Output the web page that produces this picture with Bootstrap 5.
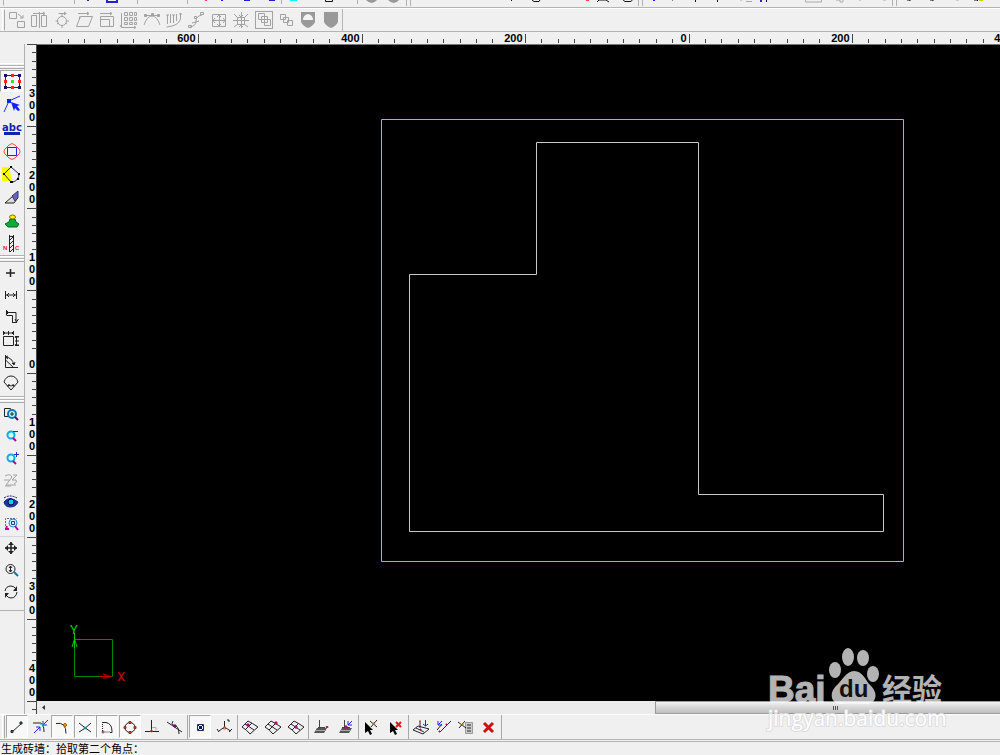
<!DOCTYPE html>
<html lang="zh-CN">
<head>
<meta charset="utf-8">
<meta name="viewport" content="width=device-width, initial-scale=1">
<title>CAD</title>
<link href="https://cdn.jsdelivr.net/npm/bootstrap@5.3.0/dist/css/bootstrap.min.css" rel="stylesheet">
<style>
body{background:#f0f0f0;font:11px "Liberation Sans","Noto Sans CJK SC",sans-serif;color:#000}
svg{display:block}
.cut-bar{height:23px;margin-top:-15px;border-bottom:1px solid #b4b4b4}
.cut-bar svg{height:22px}
.modify-bar{height:24px;border-top:1px solid #fff;border-bottom:1px solid #b4b4b4;padding-left:2px}
.grip-v{width:3px;border:1px solid #fff;border-right-color:#a8a8a8}
.grip-h{height:6px;border-top:1px solid #fff;border-bottom:1px solid #a8a8a8;background:linear-gradient(#f0f0f0 1px,#b4b4b4 1px,#b4b4b4 2px,#fff 2px,#fff 3px,#f0f0f0 3px)}
.tool{width:22px;height:22px;padding:0;border:1px solid transparent;background:none;border-radius:0;display:flex;align-items:center;justify-content:center;flex:none}
.tool svg{width:20px;height:20px;flex:none;fill:none;stroke:#222;stroke-width:1}
.tool.on{background:#f8f8f8;border-color:#a6a6a6 #fff #fff #a6a6a6}
.tool:disabled svg{stroke:#a2a2a2}
.tool.framed{border-color:#a2a2a2;width:18px;height:18px;margin:2px}
.modify-set{width:338px;border-right:1px solid #b4b4b4;padding-left:1px}
.side{width:25px;border-right:1px solid #b0b0b0}
.side .tool{width:21px}
.side .set-main .tool{width:23px}
.side-fill{height:19px}
.set-main{height:187px;padding-top:1px}
.side-set{border-bottom:1px solid #b0b0b0}
.set-dim{height:135px}
.set-view{height:208px}
.set-view hr{border-color:#888;margin:1px 0 0}
.ruler-x{height:12px;margin-left:25px}
.ruler-y{width:12px}
.ruler-x svg,.ruler-y svg,.plan svg{width:100%;height:100%}
.ruler-x text,.ruler-y text{font-weight:700;font-size:11px}
.plan{background:#000;border-top:1px solid #777}
.scroll{height:13px;background:#ebebeb}
.scroll-arrow{width:14px}
.scroll-thumb{margin-left:64.2%;border:1px solid #999;border-right:0;background:linear-gradient(#f2f2f2,#d6d6d6 50%,#bebec0)}
.snap-bar{height:26px;border-top:1px solid #fff;border-bottom:1px solid #b4b4b4;padding-left:2px}
.snap-set{padding:0 1px;border-right:1px solid #a8a8a8}
.snap-bar .tool{height:23px}
.w8{width:183px}.w4{width:93px}.w3{width:71px}.w2{width:50px}
.status{height:14px;border-top:1px solid #b4b4b4;line-height:14px;padding-left:1px;margin-top:1px}
.stamp{right:52px;bottom:15px;width:184px;height:94px;pointer-events:none}
</style>
</head>
<body class="vh-100 overflow-hidden d-flex flex-column position-relative">

<header class="flex-shrink-0">
  <div class="cut-bar overflow-hidden">
    <svg width="1000" height="22" viewBox="0 -15 1000 22" fill="none" stroke-width="1">
      <path stroke="#b0b0b0" d="M3.500 0V5.500M74.500 0V4M137.500 0V4M187.500 0V4M281.500 0V4M357.500 0V4M406.500 0V6M410.500 0V6M638.500 0V6M642.500 0V6M892.500 0V6M896.500 0V6"/>
      <path stroke="#22c" stroke-width="2" d="M87 0h2M107 -4V2H117V-4M221 0h2M244 0h6M269 0h6M653 0h2M761 -2V2"/>
      <path stroke="#e44" stroke-width="2" d="M205 0h2M586 0h3"/>
      <path stroke="#0ff" stroke-width="2" d="M290 0h7"/>
      <path stroke="#111" d="M325.500 -2v3.500h7v-3M511.500 -1v2M532 0l2 1.500h5l1-1.500M597 2l2-2h7l3 2M622 -1l3 2.500h6l2-2.500M672 0h1M695.500 -1v3M717.500 -1v3M766.500 -1v3M907 0h3v1M930 0h3v1M974 0h3l1 1"/>
      <path stroke="#aaa" d="M740 0h2M746 1.500h6M805.500 -2v4h16v-4M836 0h4v2h3v-3M859 0h2M883 0h3M956 0h3"/>
      <path stroke="#cc0" stroke-width="2" d="M979 0h4"/>
      <path fill="#999" d="M366 0q6 6 11 0zM388 0q6 6 11 0z"/>
    </svg>
  </div>

  <div class="modify-bar d-flex" role="toolbar" aria-label="Modify">
    <div class="grip-v"></div>
    <div class="modify-set d-flex justify-content-between">
      <button class="tool" disabled aria-label="Copy"><svg viewBox="0 0 20 20"><path d="M2.500 2.500h7v6h-7zM10.500 11.500h7v6h-7zM11 4l5 4m0-3v3h-3"/></svg></button>
      <button class="tool" disabled aria-label="Mirror"><svg viewBox="0 0 20 20"><path d="M2.500 5.500h5v11h-5zM12.500 5.500h5v11h-5zM10.500 2v16M4 3.500h12M14 2l2 1.500L14 5"/></svg></button>
      <button class="tool" disabled aria-label="Rotate"><svg viewBox="0 0 20 20"><circle cx="10" cy="11" r="4.500"/><path d="M6.500 3.500h8M12 2l2 1.500L12 5M10 4v2M10 15v3M3.500 11h2M15 11h2M5 14l2-1M15 14l-2-1"/></svg></button>
      <button class="tool" disabled aria-label="Skew"><svg viewBox="0 0 20 20"><path d="M6.500 6.500h12l-4 10h-12zM4 3.500h11M13 2l2 1.500L13 5M5.500 6.500v3"/></svg></button>
      <button class="tool" disabled aria-label="Scale"><svg viewBox="0 0 20 20"><path d="M3.500 6.500h13v10h-13zM3.500 9.500h9v7M3 3.500h12M13 2l2 1.500L13 5"/></svg></button>
      <button class="tool" disabled aria-label="Array"><svg viewBox="0 0 20 20"><path d="M5.500 2.500h3v3h-3zM10.500 2.500h3v3h-3zM15.500 2.500h2v3h-2zM5.500 7.500h3v3h-3zM10.500 7.500h3v3h-3zM15.500 7.500h2v3h-2zM5.500 12.500h3v2h-3zM10.500 12.500h3v2h-3zM15.500 12.500h2v2h-2zM2.500 3v14.500H17M1 15l1.500 2.500M15 16l2 1.500-2 1"/></svg></button>
      <button class="tool" disabled aria-label="Arc array"><svg viewBox="0 0 20 20"><path d="M2 15q3-9 8-9t8 9M3 5.500h14"/><path fill="#a2a2a2" d="M2.500 4.500v2h2v-2zM9.500 3.500v2h2v-2zM15.500 4.500v2h2v-2z"/></svg></button>
      <button class="tool" disabled aria-label="Stretch"><svg viewBox="0 0 20 20"><path d="M3.500 5v9M6.500 4v9M9.500 5v8M12.500 4v7M16.500 3v6q-2 7-14 8M2 5h3M8 5h3M15 4h3"/></svg></button>
      <button class="tool" disabled aria-label="Path array"><svg viewBox="0 0 20 20"><path d="M4 17q6-1 6-6t6-6M14.500 2.500h3v2h-3zM8.500 6.500h2v2h-2zM2.500 15.500h3v2h-3zM10 12l3-1M6 13l4-1"/></svg></button>
      <button class="tool" disabled aria-label="Expand"><svg viewBox="0 0 20 20"><path d="M3.500 4.500h13v12h-13zM10.500 5v11M4 10.500h12M8 7l2-2 2 2M8 14l2 2 2-2M6 8l-2 2.500L6 13M14 8l2 2.500-2 2.500"/></svg></button>
      <button class="tool" disabled aria-label="Explode"><svg viewBox="0 0 20 20"><path d="M6.500 7.500h7v7h-7zM10.500 2v16M2 10.500h16M3 4l4 4M17 4l-4 4M3 17l4-3M17 17l-4-3M8 5l2 2 2-2M8 17l2-2 2 2"/></svg></button>
      <button class="tool framed" disabled aria-label="Group"><svg viewBox="0 0 20 20"><path d="M4.500 3.500h6v6h-6zM7.500 6.500h6v6h-6zM10.500 9.500h6v6h-6z"/></svg></button>
      <button class="tool" disabled aria-label="Ungroup"><svg viewBox="0 0 20 20"><path d="M4.500 4.500h5v5h-5zM7.500 7.500h5v5h-5zM11.500 10.500h5v5h-5z"/></svg></button>
      <button class="tool" disabled aria-label="Half shield"><svg viewBox="0 0 20 20"><path fill="#999" stroke="none" d="M3 2h14v10q-2 4-7 6-5-2-7-6z"/><path fill="#f4f4f4" stroke="none" d="M5 10q0-5 5-6 5 1 5 6z"/></svg></button>
      <button class="tool" disabled aria-label="Shield"><svg viewBox="0 0 20 20"><path fill="#999" stroke="none" d="M3 2h14v10q-2 4-7 6-5-2-7-6z"/></svg></button>
    </div>
  </div>
</header>

<main class="d-flex flex-column flex-grow-1 overflow-hidden">
  <div class="ruler-x flex-shrink-0"><svg id="rx" role="img" aria-label="Horizontal ruler"></svg></div>
  <div class="d-flex flex-grow-1 overflow-hidden">
    <aside class="side flex-shrink-0" role="toolbar" aria-label="Draw and view" aria-orientation="vertical">
      <div class="side-fill"></div>
      <div class="grip-h"></div>
      <div class="side-set set-main d-flex flex-column justify-content-between">
        <button class="tool on" aria-label="Select"><svg viewBox="0 0 20 20"><path stroke="#227" d="M3.500 4.500h14v12h-14z"/><path fill="#116" stroke="none" d="M2 3h3v3H2zM16 3h3v3h-3zM2 15h3v3H2zM16 15h3v3h-3z"/><path fill="#f22" stroke="none" d="M9 3h3v3H9zM9 15h3v3H9zM2 9h3v3H2zM16 9h3v3h-3z"/><path fill="#2e2" stroke="none" d="M9 9h3v3H9z"/></svg></button>
        <button class="tool" aria-label="Node edit"><svg viewBox="0 0 20 20"><path stroke="#23d" d="M2 18L7 7l11-5"/><path fill="#12e" stroke="none" d="M5 5h4v4H5zM9 8l9 3-3 1 3 4-2 1-3-3-1 3z"/></svg></button>
        <button class="tool" aria-label="Text"><svg viewBox="0 0 20 20"><text x="0" y="13" font-family="DejaVu Sans, sans-serif" font-weight="700" font-size="10" fill="#12b" stroke="none">abc</text><path fill="#12a" stroke="none" d="M2 14h16v3H2z"/></svg></button>
        <button class="tool" aria-label="Shapes"><svg viewBox="0 0 20 20"><path stroke="#f44" d="M7 4q3-3 6 0M16 7q4 3.500 0 7M13 17q-3 3-6 0M4 14q-4-3.500 0-7M7 4L4 7M13 4l3 3M16 14l-3 3M4 14l3 3"/><path stroke="#22d" d="M5.500 6.500h9v8h-9z"/></svg></button>
        <button class="tool" aria-label="Polyline"><svg viewBox="0 0 20 20"><path fill="#ff0" stroke="none" d="M0 3h7l3 14H0z"/><path stroke="#226" d="M2 10l7-7 8 7q0 6-6 8H9z"/><path fill="#000" stroke="none" d="M1 9h2v2H1zM8 2h2v2H8zM16 9h2v2h-2zM8 17h3v2H8zM15 14h2v2h-2z"/></svg></button>
        <button class="tool" aria-label="Knife"><svg viewBox="0 0 20 20"><path fill="#ddd" d="M3 16l8-7 4 3-3 4z"/><path fill="#66b" stroke="#336" d="M10 9l6-5v7l-3 3z"/></svg></button>
        <button class="tool" aria-label="Stamp"><svg viewBox="0 0 20 20"><path fill="#1a3" stroke="#063" d="M8 8h5l1 3 3 2-2 3H6l-3-3 4-2z"/><ellipse cx="10.500" cy="6" rx="3" ry="2" fill="#fe0" stroke="#770"/></svg></button>
        <button class="tool" aria-label="NC"><svg viewBox="0 0 20 20"><path d="M7.500 1v17M11.500 1v17M7.500 2.500h4M8 6l3-3M8 10l3-3M8 14l3-3M8 18l3-3"/><text x="1" y="16" font-size="6" font-weight="700" fill="#e22" stroke="none">N</text><text x="13" y="16" font-size="6" font-weight="700" fill="#e22" stroke="none">C</text></svg></button>
      </div>
      <div class="grip-h"></div>
      <div class="side-set set-dim">
        <button class="tool" aria-label="Point"><svg viewBox="0 0 20 20"><path stroke-width="1.500" d="M5 10h9M9.500 6v8"/></svg></button>
        <button class="tool" aria-label="Distance"><svg viewBox="0 0 20 20"><path d="M4.500 6v8M15.500 6v8M5 10h10M8 8l-2 2 2 2M12 8l2 2-2 2"/></svg></button>
        <button class="tool" aria-label="Step dimension"><svg viewBox="0 0 20 20"><path d="M5.500 3v5M5 5.500h10v9M5.500 8.500h6v7M11 15.500h5M7 4L5.500 5.500 7 7M14 12l1.500 3 2-3"/></svg></button>
        <button class="tool" aria-label="Size"><svg viewBox="0 0 20 20"><path d="M2.500 7.500h10v9h-10zM2.500 2v4M12.500 2v4M7.500 2v4M2 4h10M14 7.500h4M14 16.500h4M14 12h4M15.500 7v10M4 3L3 4l1 1M11 3l1 1-1 1M14 9l1.500-2 2 2M14 15l1.500 2 2-2"/></svg></button>
        <button class="tool" aria-label="Angle"><svg viewBox="0 0 20 20"><path d="M4.500 4v12.500H17M4.500 9L12 16M4 6q7 0 9 8M7 5L4.500 6 7 8M11 12l2 2 1-3"/></svg></button>
        <button class="tool" aria-label="Radius"><svg viewBox="0 0 20 20"><path d="M3 9q2-6 7-6t7 6l-7 8zM7 12q3 2 6 0M7 14v-2h2M13 14v-2h-2"/></svg></button>
      </div>
      <div class="grip-h"></div>
      <div class="side-set set-view">
        <button class="tool" aria-label="Zoom window"><svg viewBox="0 0 20 20"><path fill="#eee" d="M3.500 4.500h6v8h-6z"/><circle cx="11" cy="10" r="4" fill="#bff" stroke="#17b" stroke-width="2"/><path stroke="#707" stroke-width="2" d="M14 13l3 3"/><path d="M9 10h4M11 8v4"/></svg></button>
        <button class="tool" aria-label="Zoom out"><svg viewBox="0 0 20 20"><circle cx="10" cy="9" r="3.500" fill="#dff" stroke="#1ad" stroke-width="2"/><path stroke="#b08" stroke-width="2" d="M12 12l3 3"/><path stroke="#23b" d="M12 5.500h5"/></svg></button>
        <button class="tool" aria-label="Zoom in"><svg viewBox="0 0 20 20"><circle cx="10" cy="10" r="3.500" fill="#dff" stroke="#1ad" stroke-width="2"/><path stroke="#b08" stroke-width="2" d="M12 13l3 3"/><path stroke="#23b" d="M13 6.500h5M15.500 4v5"/></svg></button>
        <button class="tool" disabled aria-label="Zoom back"><svg viewBox="0 0 20 20"><path d="M4 6q5-3 7 1l-6 8h10M12 5h4l-5 5h4q2 2-2 4M3 10h5M4 16h6"/></svg></button>
        <button class="tool" aria-label="View"><svg viewBox="0 0 20 20"><path fill="#23a" stroke="#11328a" d="M3 10q5-7 14 0-2 5-8 5-5 0-6-5z"/><circle cx="10" cy="10" r="3" fill="#0cf" stroke="#004"/><path stroke="#115" stroke-dasharray="2 1" d="M3 6q6-4 13 0"/></svg></button>
        <button class="tool" aria-label="Zoom extents"><svg viewBox="0 0 20 20"><path stroke="#66a" stroke-dasharray="2 1" d="M4.500 12V4.500h11"/><circle cx="12" cy="9" r="4" fill="#cff" stroke="#28b"/><path stroke="#238" d="M10.500 7.500h3v3h-3z"/><path stroke="#b0a" stroke-width="2" d="M4 15h4M6 12l-1 3M14 12l3 4"/></svg></button>
        <hr>
        <button class="tool" aria-label="Pan"><svg viewBox="0 0 20 20"><path d="M4 10h12M10 4v12" stroke-width="1.500"/><path fill="#222" stroke="none" d="M10 4l3 3H7zM10 16l3-3H7zM4 10l3-3v6zM16 10l-3-3v6z"/></svg></button>
        <button class="tool" aria-label="Dynamic zoom"><svg viewBox="0 0 20 20"><circle cx="9.500" cy="9" r="4.500"/><path d="M9.500 6v6M8 8l1.500-2L11 8M8 10l1.500 2 1.500-2"/><path stroke="#17a" stroke-width="2" d="M13 12l4 4"/></svg></button>
        <button class="tool" aria-label="Redraw"><svg viewBox="0 0 20 20"><path d="M4 9q1-5 6-5 3 0 5 3M16 10q-1 6-6 6-3 0-5-3"/><path fill="#222" stroke="none" d="M16 4v5h-4zM4 16v-5h4z"/></svg></button>
      </div>
    </aside>

    <div class="ruler-y flex-shrink-0"><svg id="ry" role="img" aria-label="Vertical ruler"></svg></div>

    <div class="d-flex flex-column flex-grow-1 overflow-hidden">
      <div class="plan flex-grow-1 overflow-hidden">
        <svg role="img" aria-label="Drawing">
          <g transform="translate(-37 -45)" fill="none">
            <path stroke="#c4c400" d="M381.500 119.500H903.500V561.500H381.500Z"/>
            <path stroke="#c8c8c8" d="M536.500 142.500H698.500V494.500H883.500V531.500H409.500V274.500H536.500Z"/>
            <path stroke="#080" d="M74.500 639.500H112.500V676.500H74.500Z"/>
            <path stroke="#0c0" d="M74.500 633V648M72 647l2.500-8 2.500 8"/>
            <path stroke="#b00" d="M103 674l8 2.500-8 2M100 676.500h12"/>
            <g font-family="Roboto, sans-serif" font-size="13">
              <text x="70" y="634" fill="#0c0">Y</text>
              <text x="117" y="681" fill="#c00">X</text>
            </g>
          </g>
        </svg>
      </div>
      <div class="scroll d-flex flex-shrink-0">
        <svg class="scroll-arrow position-absolute" viewBox="0 0 14 13"><path fill="#333" d="M8 4v5L5 6.500z"/></svg>
        <div class="scroll-thumb flex-grow-1 d-flex justify-content-center align-items-center">
          <svg class="ms-3" width="8" height="6" stroke="#555"><path d="M1.500 1v4M3.500 1v4M5.500 1v4"/></svg>
        </div>
      </div>
    </div>
  </div>
</main>

<footer class="flex-shrink-0">
  <div class="snap-bar d-flex" role="toolbar" aria-label="Object snap">
    <div class="grip-v"></div>
    <div class="snap-set w8 d-flex justify-content-between">
      <button class="tool on" aria-label="Endpoint"><svg viewBox="0 0 20 20"><path d="M5 15L15 6"/><path fill="#0aa" d="M4 13.500h2v2H4zM13 5h2v2h-2z"/></svg></button>
      <button class="tool" aria-label="Nearest"><svg viewBox="0 0 20 20"><path d="M3 6h8q3 2 3 9"/><path stroke="#22e" d="M4 16l6-6M10 14v-4H6M18 3l-5 5M13 4v4h4"/><path stroke="#0bb" d="M10 7h3v3"/></svg></button>
      <button class="tool on" aria-label="Midpoint"><svg viewBox="0 0 20 20"><path d="M4 6.500q10-2 10 10"/><circle cx="13" cy="8" r="1.500" fill="#fa0" stroke="#a50"/></svg></button>
      <button class="tool on" aria-label="Intersection"><svg viewBox="0 0 20 20"><path d="M4 6q6 5 12 9M4 15q6-3 12-9"/><circle cx="10" cy="11" r="1" fill="#0cc" stroke="#088"/></svg></button>
      <button class="tool on" aria-label="Arc centre"><svg viewBox="0 0 20 20"><path d="M5 5.500h4q6 1 6 9v1h-2"/><path stroke-dasharray="1 1" d="M5.500 7v8H13"/><circle cx="6" cy="15" r="1" fill="#0cc" stroke="#a44"/></svg></button>
      <button class="tool on" aria-label="Quadrant"><svg viewBox="0 0 20 20"><circle cx="10" cy="10.500" r="5"/><path fill="#d42" stroke="#832" d="M9 4.500h2v2H9zM9 14.500h2v2H9zM4 9.500h2v2H4zM14 9.500h2v2h-2z"/></svg></button>
      <button class="tool" aria-label="Perpendicular"><svg viewBox="0 0 20 20"><path d="M9.500 3v11M3 14.500h14"/><path stroke="#aaa" d="M10 10.500h4v3"/><circle cx="9.500" cy="14" r="1" stroke="#c44"/></svg></button>
      <button class="tool" aria-label="Tangent"><svg viewBox="0 0 20 20"><path d="M2 5l15 10M8 4q-2 3 0 4 6 0 6 9"/><path fill="#c08" stroke="#707" d="M9 8h2v2H9z"/></svg></button>
    </div>
    <div class="snap-set w2 d-flex justify-content-between">
      <button class="tool on" aria-label="Node"><svg viewBox="0 0 20 20"><path fill="#dff" stroke="#226" d="M7.500 7.500h6v6h-6z"/><path stroke="#226" d="M8 8l5 5M13 8l-5 5"/><path fill="#115" stroke="none" d="M9 9h3v3H9z"/></svg></button>
      <button class="tool" aria-label="Axis"><svg viewBox="0 0 20 20"><path d="M9.500 4v6L4 14M9.500 10l6 4M2 12l2 3M14 15l3-3M12 3h2v2"/><path stroke="#c42" d="M8.500 10h2v2h-2z"/></svg></button>
    </div>
    <div class="snap-set w3 d-flex justify-content-between">
      <button class="tool" aria-label="Grid vertex"><svg viewBox="0 0 20 20"><path d="M2 10l6-6q4 2 10 6l-8 7q-3-4-8-7M5 7l9 6M12 6l-7 7"/><path fill="#d08" stroke="#a07" d="M7 7h2v2H7z"/></svg></button>
      <button class="tool" aria-label="Grid edge"><svg viewBox="0 0 20 20"><path d="M2 10l6-6q4 2 10 6l-8 7q-3-4-8-7M5 7l9 6M13 6l-7 7"/><path fill="#d08" stroke="#a07" d="M12 5h2v2h-2z"/></svg></button>
      <button class="tool" aria-label="Grid centre"><svg viewBox="0 0 20 20"><path d="M2 10l6-6q4 2 10 6l-8 7q-3-4-8-7M5 7l9 6M13 6l-7 7"/><path fill="#d08" stroke="#a07" d="M9 9h2v2H9z"/></svg></button>
    </div>
    <div class="snap-set w2 d-flex justify-content-between">
      <button class="tool" aria-label="Plane"><svg viewBox="0 0 20 20"><path stroke="#444" d="M8.500 3v7M7 10.500h7"/><path fill="#555" stroke="none" d="M6 11h10l-3 5H3z"/><path stroke="#aaa" d="M5 13.500h9"/><path fill="#e42" stroke="#a32" d="M15 9.500h2v1h-2z"/></svg></button>
      <button class="tool" aria-label="Project to plane"><svg viewBox="0 0 20 20"><path stroke="#444" d="M8.500 3v7M6 10.500h8"/><path fill="#555" stroke="none" d="M6 11h10l-3 5H3z"/><path stroke="#aaa" d="M5 13.500h9"/><path stroke="#22e" d="M16 4l-4 4M12 4v4h4"/><path fill="#d08" stroke="#a07" d="M9 9h2v2H9z"/></svg></button>
    </div>
    <div class="snap-set w2 d-flex justify-content-between">
      <button class="tool" aria-label="Pick intersection"><svg viewBox="0 0 20 20"><path fill="#000" stroke="none" d="M4 5v11l3-2 2 4 2-1-2-4h3z"/><path d="M9 4l7 6M16 3l-6 7"/><path fill="#fb0" stroke="#b70" d="M12 6h1v1h-1z"/></svg></button>
      <button class="tool" aria-label="Cancel pick"><svg viewBox="0 0 20 20"><path fill="#000" stroke="none" d="M4 5v11l3-2 2 4 2-1-2-4h3z"/><path stroke="#e11" stroke-width="2" d="M10 5l5 5M15 5l-5 5"/></svg></button>
    </div>
    <div class="snap-set w4 d-flex justify-content-between">
      <button class="tool" aria-label="Project point"><svg viewBox="0 0 20 20"><path d="M2 13l5-4 11 3-6 5zM9 4v7M5 11l8 4"/><path stroke="#22e" d="M14.500 3v6M12 7l2.500 2L17 7"/><path fill="#d08" stroke="#a07" d="M9 12h1v1H9z"/><path stroke="#c42" d="M8 4h2"/></svg></button>
      <button class="tool" aria-label="Measure point"><svg viewBox="0 0 20 20"><path d="M3 13l5-6M6 15L17 4"/><path stroke="#22e" d="M8 4L4 8M4 4v4h4"/><path fill="#d08" stroke="#a07" d="M5 14h1v1H5zM12 7h1v1h-1z"/></svg></button>
      <button class="tool" aria-label="Snap settings"><svg viewBox="0 0 20 20"><path fill="#ccc" stroke="#999" d="M9.500 5.500h7v11h-7z"/><path d="M2 5l8 6M9 4l-6 7M11 8h4M11 11h4M11 14h4"/><path fill="#fb0" stroke="#b70" d="M6 7h1v1H6z"/></svg></button>
      <button class="tool" aria-label="Clear snaps"><svg viewBox="0 0 20 20"><path stroke="#c11" stroke-width="3" d="M5 6l9 9M14 6l-9 9"/></svg></button>
    </div>
  </div>
  <div class="status">生成砖墙：拾取第二个角点：</div>
</footer>

<svg class="stamp position-absolute" viewBox="0 0 184 94" fill="#fff" role="img" aria-label="Baidu">
  <g opacity=".7">
    <text x="4" y="56" font-family="Liberation Sans, sans-serif" font-size="37" font-weight="700" stroke="#fff">Bai</text>
    <ellipse cx="71" cy="24" rx="6" ry="8"/><ellipse cx="84" cy="11" rx="6" ry="9"/><ellipse cx="99" cy="12" rx="6" ry="8"/><ellipse cx="109" cy="28" rx="6" ry="8"/>
    <path d="M90 25c9 0 11 9 17 15 8 8 5 18-5 18-7 0-18-1-24 0-10 1-14-10-6-18 6-5 10-15 18-15z"/>
    <text x="118" y="54" font-family="Noto Sans CJK SC, sans-serif" font-size="30" font-weight="700">经验</text>
  </g>
  <text x="75" y="51" font-family="Liberation Sans, sans-serif" font-size="24" font-weight="700" fill="#111">du</text>
  <text x="4" y="80" font-family="Open Sans, sans-serif" font-size="21" stroke="#dcdcdc" stroke-width="2" paint-order="stroke">jingyan.baidu.com</text>
</svg>

<script>
function line(x1, y1, x2, y2) {
  return `<path stroke="#444" d="M${x1} ${y1}L${x2} ${y2}"/>`;
}
// Horizontal ruler: one label per ten ticks
function drawRulerX() {
  const el = document.getElementById('rx');
  const step = 16.34, zero = 664, width = el.parentNode.clientWidth;
  let out = '';
  for (let i = -39; zero + i * step < width + 16; i++) {
    const x = Math.floor(zero + i * step) + 0.5;
    if (i % 10 === 0) {
      const label = String(Math.abs(i) * 20);
      out += line(x, 2, x, 11) + `<text x="${x - 3}" y="10" text-anchor="end">${label}</text>`;
    } else if ((i + 100) % 10 !== 9 || i === -1) {
      out += line(x, 7, x, 11);
    }
  }
  el.innerHTML = out;
}
// Vertical ruler: digits are stacked above each major tick
function drawRulerY() {
  const el = document.getElementById('ry');
  const step = 8.21, zero = 329, height = el.parentNode.clientHeight;
  let out = line(11.5, 0, 11.5, height);
  for (let i = -40; zero + i * step < height; i++) {
    const y = Math.floor(zero + i * step) + 0.5;
    const next = Math.ceil(i / 10) * 10;
    const hidden = next === 0 ? 2 : 4;
    if (i % 10 === 0) {
      out += line(2, y, 11, y);
      const digits = i > -40 ? String(Math.abs(i) * 10) : '';
      [...digits].forEach((d, k) => {
        out += `<text x="4" y="${y - 6 - 12 * (digits.length - 1 - k)}">${d}</text>`;
      });
    } else if (next - i > hidden) {
      out += line(7, y, 11, y);
    }
  }
  el.innerHTML = out;
}
function drawRulers() {
  drawRulerX();
  drawRulerY();
}
drawRulers();
window.addEventListener('load', drawRulers);
window.addEventListener('resize', drawRulers);
</script>
<script src="https://cdn.jsdelivr.net/npm/bootstrap@5.3.0/dist/js/bootstrap.bundle.min.js"></script>
</body>
</html>
